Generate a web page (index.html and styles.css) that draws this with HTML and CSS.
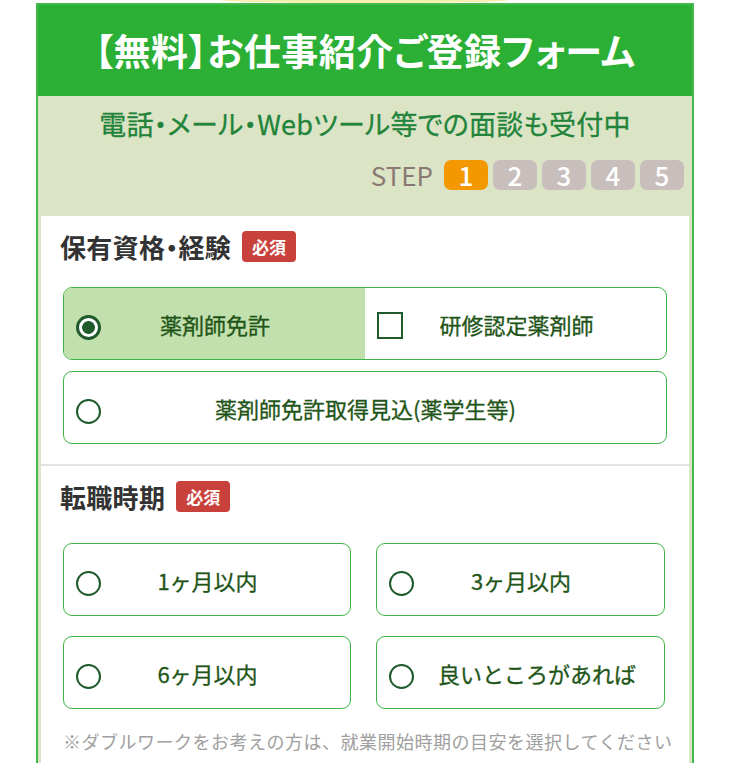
FILE: index.html
```html
<!DOCTYPE html>
<html lang="ja">
<head>
<meta charset="utf-8">
<title>お仕事紹介ご登録フォーム</title>
<link rel="stylesheet" href="styles.css">
</head>
<body>
<div class="deco"></div>
<div class="form">
  <div class="hdr"><h1 class="hdr-title">【無料】お仕事紹介ご登録フォーム</h1></div>
  <div class="sub">
    <p class="lead">電話・メール・Webツール等での面談も受付中</p>
    <div class="steps">
      <span class="step-label">STEP</span>
      <span class="step step-on">1</span>
      <span class="step">2</span>
      <span class="step">3</span>
      <span class="step">4</span>
      <span class="step">5</span>
    </div>
  </div>
  <div class="body">
    <section class="sec">
      <div class="sec-head"><h2 class="sec-title">保有資格・経験</h2><span class="req">必須</span></div>
      <div class="opt-list">
        <div class="opt opt-split">
          <label class="opt-half opt-sel"><span class="radio radio-on"></span><span class="opt-txt">薬剤師免許</span><span class="spacer"></span></label>
          <label class="opt-half"><span class="check"></span><span class="opt-txt">研修認定薬剤師</span><span class="spacer"></span></label>
        </div>
        <label class="opt"><span class="radio"></span><span class="opt-txt">薬剤師免許取得見込(薬学生等)</span><span class="spacer"></span></label>
      </div>
    </section>
    <section class="sec sec-second">
      <div class="sec-head"><h2 class="sec-title">転職時期</h2><span class="req">必須</span></div>
      <div class="opt-grid">
        <label class="opt"><span class="radio"></span><span class="opt-txt">1ヶ月以内</span><span class="spacer"></span></label>
        <label class="opt"><span class="radio"></span><span class="opt-txt">3ヶ月以内</span><span class="spacer"></span></label>
        <label class="opt"><span class="radio"></span><span class="opt-txt">6ヶ月以内</span><span class="spacer"></span></label>
        <label class="opt"><span class="radio"></span><span class="opt-txt">良いところがあれば</span><span class="spacer"></span></label>
      </div>
      <p class="note">※ダブルワークをお考えの方は、就業開始時期の目安を選択してください</p>
    </section>
  </div>
</div>
</body>
</html>
```

FILE: styles.css
```css
* { box-sizing: border-box; }
html, body { margin: 0; padding: 0; background: #ffffff; }
body {
  font-family: "Noto Sans CJK JP", "Noto Sans", sans-serif;
  overflow: hidden;
}
.deco {
  width: 290px;
  height: 3px;
  margin: 0 auto;
  background: #f6f0ac;
  border-radius: 0 0 50% 50% / 0 0 100% 100%;
}
.form {
  width: 658px;
  margin: 0 auto;
  border: 2px solid #46b94e;
  border-bottom: none;
  background: #dce4c6;
}
.hdr {
  background: #2bb035;
  height: 91px;
  display: flex;
  align-items: center;
  justify-content: center;
}
.hdr-title {
  margin: 0;
  color: #ffffff;
  font-size: 37px;
  font-weight: 700;
  line-height: 1;
  font-feature-settings: "palt";
  letter-spacing: 0.5px;
}
.sub {
  padding: 10px 8px 26px;
}
.lead {
  margin: 0;
  text-align: center;
  color: #22843a;
  font-size: 27px;
  font-weight: 400;
  line-height: 36px;
  font-feature-settings: "palt";
  letter-spacing: 0.2px;
  -webkit-text-stroke: 0.3px #22843a;
}
.steps {
  margin-top: 18px;
  display: flex;
  justify-content: flex-end;
  align-items: center;
  gap: 5px;
}
.step-label {
  color: #8a7873;
  font-size: 26px;
  line-height: 30px;
  margin-right: 6px;
  font-weight: 400;
}
.step {
  width: 44px;
  height: 30px;
  border-radius: 7px;
  background: #c8bebb;
  color: #ffffff;
  font-size: 26px;
  font-weight: 500;
  line-height: 30px;
  text-align: center;
}
.step-on { background: #f39800; }
.body {
  padding: 0 3px;
}
.sec {
  background: #ffffff;
  padding: 15px 22px 20px 22px;
}
.sec-second {
  border-top: 2px solid #e2e2e2;
}
.sec-head {
  display: flex;
  align-items: center;
  gap: 11px;
  height: 31px;
  margin-left: -3px;
}
.sec-title {
  margin: 0;
  font-size: 26px;
  font-weight: 700;
  color: #333333;
  line-height: 31px;
  font-feature-settings: "palt";
  letter-spacing: 0.3px;
}
.req {
  background: #c8413b;
  color: #ffffff;
  font-size: 17px;
  font-weight: 700;
  line-height: 31px;
  height: 31px;
  padding: 0 10px;
  border-radius: 4px;
}
.opt-list {
  margin-top: 25px;
  display: flex;
  flex-direction: column;
  gap: 11px;
}
.opt {
  height: 73px;
  border: 1.5px solid #3cb544;
  border-radius: 9px;
  background: #ffffff;
  display: flex;
  align-items: center;
  padding: 0 12px;
}
.opt-split {
  padding: 0;
  overflow: hidden;
  align-items: stretch;
}
.opt-half {
  flex: 1 1 0;
  display: flex;
  align-items: center;
  padding: 0 12px;
}
.opt-sel { background: #c2dfae; }
.radio {
  flex: none;
  width: 25px;
  height: 25px;
  border: 2px solid #1e5a2b;
  border-radius: 50%;
  background: #ffffff;
  margin-top: 8px;
}
.radio-on {
  border-width: 3px;
  background: radial-gradient(circle, #1e5a2b 0 6px, #ffffff 6.8px);
}
.check {
  flex: none;
  width: 26px;
  height: 27px;
  border: 2px solid #1e5a2b;
  background: #ffffff;
  margin-top: 3px;
}
.spacer {
  flex: none;
  width: 24px;
}
.opt-txt {
  flex: 1 1 0;
  min-width: 0;
  margin: 0 24px;
  text-align: center;
  white-space: nowrap;
  color: #1f5518;
  font-size: 22px;
  font-weight: 400;
  line-height: 30px;
  -webkit-text-stroke: 0.3px #1f5518;
}
.opt-grid {
  margin-top: 31px;
  display: grid;
  grid-template-columns: 288px 289px;
  column-gap: 25px;
  row-gap: 20px;
}
.note {
  margin: 20px 0 0;
  color: #a0a0a0;
  font-size: 18px;
  letter-spacing: 0.5px;
  line-height: 24px;
  white-space: nowrap;
}
```
